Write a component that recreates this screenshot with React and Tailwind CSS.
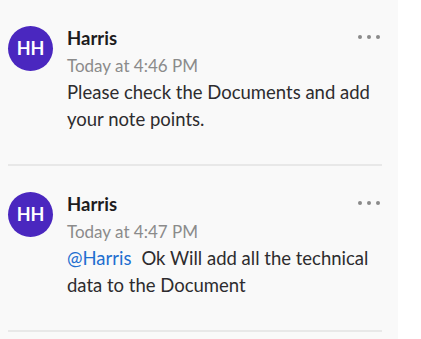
import React from 'react';

const messages = [
  {
    id: 1,
    name: 'Harris',
    time: 'Today at 4:46 PM',
    mention: null,
    text: 'Please check the Documents and add your note points.',
  },
  {
    id: 2,
    name: 'Harris',
    time: 'Today at 4:47 PM',
    mention: '@Harris',
    text: 'Ok Will add all the technical data to the Document',
  },
];

function Message({ msg }) {
  return (
    <div>
      <div className="flex pl-2 pr-4 pt-[25px] pb-[31px]">
        <div className="mt-[1px] flex h-[45px] w-[45px] shrink-0 items-center justify-center rounded-full bg-[#4a27bf] text-[18px] font-bold text-white">
          HH
        </div>
        <div className="ml-[14px] flex-1 text-[18.5px] leading-[27px] text-[#2d2c2e]">
          <div className="flex items-start justify-between">
            <span className="font-bold text-[#1d1c1d]">{msg.name}</span>
            <span className="mt-[10px] mr-[2px] flex gap-[5px]">
              <span className="h-[4px] w-[4px] rounded-full bg-[#8a8a8a]"></span>
              <span className="h-[4px] w-[4px] rounded-full bg-[#8a8a8a]"></span>
              <span className="h-[4px] w-[4px] rounded-full bg-[#8a8a8a]"></span>
            </span>
          </div>
          <div className="text-[17px] text-[#8b8b8b]">{msg.time}</div>
          <p className="pr-2">
            {msg.mention && <span className="mr-[10px] text-[#1f6fd0]">{msg.mention}</span>}
            {msg.text}
          </p>
        </div>
      </div>
      <div className="mx-2 h-[2px] w-[374px] bg-[#e8e8e8]"></div>
    </div>
  );
}

export default function App() {
  return (
    <div className="flex h-[339px] w-[421px] bg-white" style={{ fontFamily: 'Lato, "Open Sans", sans-serif' }}>
      <div className="h-full w-[398px] bg-[#f9f9f9]">
        {messages.map((msg) => (
          <Message key={msg.id} msg={msg} />
        ))}
      </div>
    </div>
  );
}
